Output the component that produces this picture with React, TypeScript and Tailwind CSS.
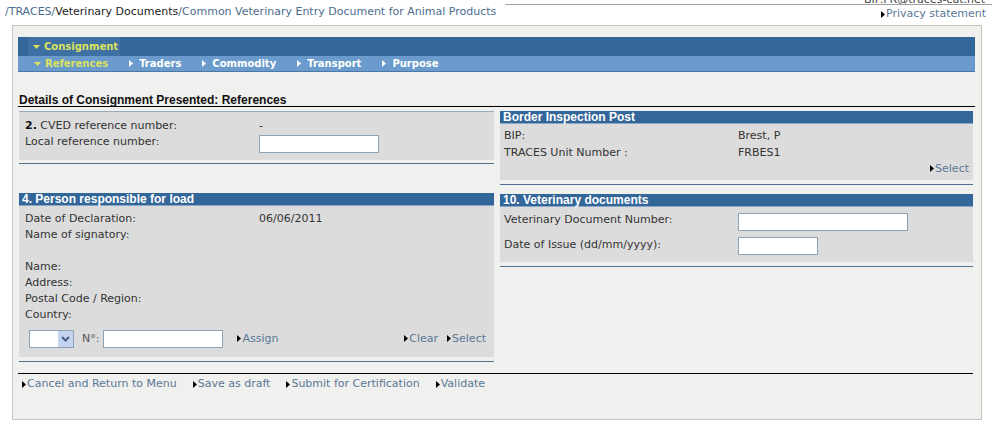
import React from 'react'

function Tri({ className = 'text-black' }: { className?: string }) {
  return (
    <svg width="4" height="7" viewBox="0 0 4 7" className={'inline-block mr-[1px] fill-current ' + className}>
      <path d="M0 0L4 3.5L0 7Z" />
    </svg>
  )
}

function Down({ className = '' }: { className?: string }) {
  return (
    <svg width="7" height="4" viewBox="0 0 7 4" className={'inline-block fill-current ' + className}>
      <path d="M0 0L7 0L3.5 4Z" />
    </svg>
  )
}

function Link({ children }: { children: React.ReactNode }) {
  return (
    <span className="text-[#5b7896] whitespace-nowrap">
      <Tri />
      {children}
    </span>
  )
}

function Input({ w }: { w: string }) {
  return <div className={'h-[18px] bg-white border border-[#8ea2b6] ' + w} />
}

function Header({ children }: { children: React.ReactNode }) {
  return (
    <div className="h-[13px] bg-[#336699] border-b border-[#8aa6c4] text-white font-bold leading-[12px] pl-[3px] font-['Liberation_Sans',sans-serif] text-[12px]">
      {children}
    </div>
  )
}

function Row({ label, value, h = 'h-[16px]' }: { label: React.ReactNode; value?: React.ReactNode; h?: string }) {
  return (
    <div className={'flex items-center ' + h}>
      <div className="w-[234px] shrink-0">{label}</div>
      <div>{value}</div>
    </div>
  )
}

export default function App() {
  return (
    <div className="w-[992px] h-[426px] bg-white overflow-hidden font-['DejaVu_Sans',sans-serif] text-[11px] text-[#333]">
      {/* top strip */}
      <div className="flex h-[25px]">
        <div className="pl-[5px] pt-[5px] leading-[14px] whitespace-nowrap">
          <span className="text-[#4d6d8d]">/TRACES/</span>
          <span className="text-[#222]">Veterinary Documents</span>
          <span className="text-[#4d6d8d]">/Common Veterinary Entry Document for Animal Products</span>
        </div>
        <div className="ml-auto w-[487px] flex flex-col">
          <div className="h-[4px] overflow-hidden flex justify-end items-end pr-[7px]">
            <span className="leading-[8px] text-[#444] whitespace-nowrap">BIP.FR@traces-cat.net</span>
          </div>
          <div className="border-t border-[#a0a0a0] flex justify-end pr-[6px] pt-[2px] leading-[14px]">
            <Link>Privacy statement</Link>
          </div>
        </div>
      </div>

      {/* main panel */}
      <div className="ml-[12px] w-[970px] h-[395px] border border-[#c5c5bd] bg-[#f0f0ee] pt-[11px] pl-[5px] pr-[6px]">
        {/* nav */}
        <div className="h-[19px] bg-[#336699] flex pl-[10px] font-bold text-[10px]">
          <div className="bg-[#3f70a3] w-[92px] flex items-center gap-[4px] pl-[5px] text-[#dde25c]">
            <Down />
            <span>Consignment</span>
          </div>
        </div>
        <div className="h-[16px] bg-[#6a9bcc] border-b border-[#4a78a8] flex items-center pl-[16px] gap-[21px] font-bold text-white text-[10px]">
          <span className="flex items-center gap-[4px] text-[#dde25c]"><Down />References</span>
          <span className="flex items-center gap-[5px]"><Tri className="text-white" />Traders</span>
          <span className="flex items-center gap-[5px]"><Tri className="text-white" />Commodity</span>
          <span className="flex items-center gap-[5px]"><Tri className="text-white" />Transport</span>
          <span className="flex items-center gap-[5px]"><Tri className="text-white" />Purpose</span>
        </div>

        {/* title */}
        <div className="mt-[21px] h-[14px] border-b border-black pl-[1px] font-bold text-[#111] leading-[14px] font-['Liberation_Sans',sans-serif] text-[12px]">
          Details of Consignment Presented: References
        </div>

        {/* columns */}
        <div className="flex gap-[6px] pl-[1px] mt-[4px]">
          {/* left */}
          <div className="w-[475px] flex flex-col">
            <div className="border-b border-[#4f6f8f] pb-[3px]">
              <div className="bg-[#dcdcdc] border-t border-[#9aabbb] pl-[6px] pt-[6px] pb-[7px]">
                <Row h="h-[17px]" label={<span><b className="text-[#111]">2.</b> CVED reference number:</span>} value="-" />
                <div className="flex items-start">
                  <div className="w-[234px] shrink-0 leading-[13px]">Local reference number:</div>
                  <Input w="w-[120px]" />
                </div>
              </div>
            </div>

            <div className="mt-[29px] border-b border-[#4f6f8f] pb-[4px]">
              <Header>4. Person responsible for load</Header>
              <div className="bg-[#dcdcdc] pl-[6px] pt-[5px] pb-[9px]">
                <Row label="Date of Declaration:" value="06/06/2011" />
                <Row label="Name of signatory:" />
                <div className="h-[16px]" />
                <Row label="Name:" />
                <Row label="Address:" />
                <Row label="Postal Code / Region:" />
                <Row label="Country:" />
                <div className="mt-[7px] h-[18px] flex items-center pl-[4px] pr-[8px]">
                  <div className="w-[45px] h-[18px] bg-white border border-[#8ea2b6] flex justify-end">
                    <div className="w-[15px] bg-[#c3d3f0] flex items-center justify-center">
                      <svg width="9" height="6" viewBox="0 0 9 6">
                        <path d="M1 1L4.5 4.5L8 1" stroke="#4a5e8a" strokeWidth="2" fill="none" />
                      </svg>
                    </div>
                  </div>
                  <span className="ml-[8px] text-[#555]">N°:</span>
                  <div className="ml-[4px]"><Input w="w-[120px]" /></div>
                  <div className="ml-[14px]"><Link>Assign</Link></div>
                  <div className="ml-auto flex gap-[9px]">
                    <Link>Clear</Link>
                    <Link>Select</Link>
                  </div>
                </div>
              </div>
            </div>
          </div>

          {/* right */}
          <div className="w-[473px] flex flex-col">
            <div className="border-b border-[#4f6f8f] pb-[4px]">
              <Header>Border Inspection Post</Header>
              <div className="bg-[#dcdcdc] pl-[4px] pr-[4px] pt-[4px] pb-[4px]">
                <Row h="h-[17px]" label="BIP:" value="Brest, P" />
                <Row h="h-[17px]" label="TRACES Unit Number :" value="FRBES1" />
                <div className="flex justify-end h-[14px] items-center">
                  <Link>Select</Link>
                </div>
              </div>
            </div>

            <div className="mt-[9px] border-b border-[#4f6f8f] pb-[4px]">
              <Header>10. Veterinary documents</Header>
              <div className="bg-[#dcdcdc] pl-[4px] pt-[6px] pb-[7px] flex flex-col gap-[6px]">
                <div className="flex items-start">
                  <div className="w-[234px] shrink-0 leading-[13px]">Veterinary Document Number:</div>
                  <Input w="w-[170px]" />
                </div>
                <div className="flex items-start">
                  <div className="w-[234px] shrink-0 leading-[13px] pt-[1px]">Date of Issue (dd/mm/yyyy):</div>
                  <Input w="w-[80px]" />
                </div>
              </div>
            </div>
          </div>
        </div>

        {/* bottom actions */}
        <div className="mt-[11px] w-[955px] border-t border-black pt-[3px] pl-[4px] flex gap-[16px] leading-[13px]">
          <Link>Cancel and Return to Menu</Link>
          <Link>Save as draft</Link>
          <Link>Submit for Certification</Link>
          <Link>Validate</Link>
        </div>
      </div>
    </div>
  )
}
